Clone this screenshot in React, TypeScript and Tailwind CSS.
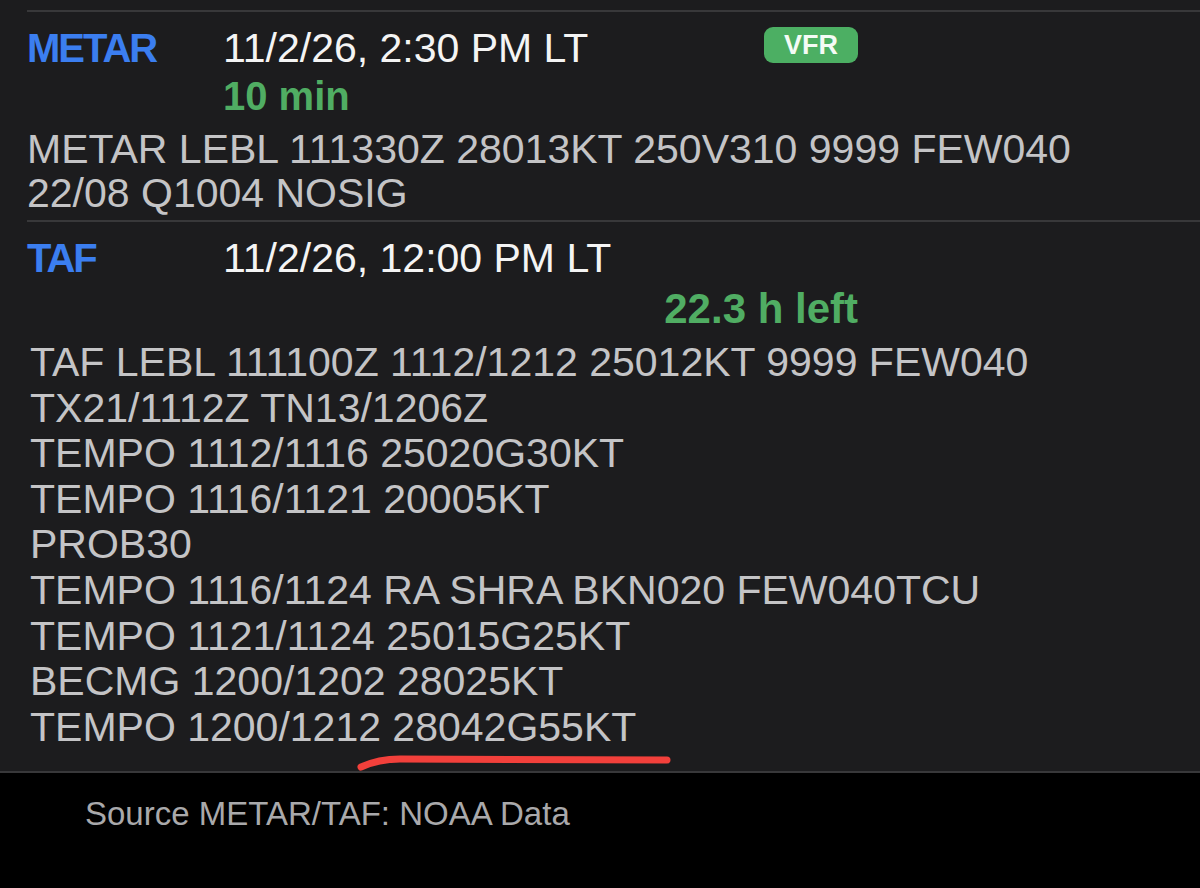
const tafLines = [
  "TAF LEBL 111100Z 1112/1212 25012KT 9999 FEW040",
  "TX21/1112Z TN13/1206Z",
  "TEMPO 1112/1116 25020G30KT",
  "TEMPO 1116/1121 20005KT",
  "PROB30",
  "TEMPO 1116/1124 RA SHRA BKN020 FEW040TCU",
  "TEMPO 1121/1124 25015G25KT",
  "BECMG 1200/1202 28025KT",
  "TEMPO 1200/1212 28042G55KT",
];

function Label({ children }: { children: React.ReactNode }) {
  return (
    <div className="w-[196px] shrink-0 text-[40px] leading-[48px] font-bold tracking-[-2px] text-[#3b7ef0]">
      {children}
    </div>
  );
}

export default function App() {
  return (
    <div className="min-h-screen bg-black font-['Liberation_Sans',Arial,sans-serif]">
      <div className="relative bg-[#1c1c1e] pl-[27px] pt-[10px] border-b-2 border-[#38383a]">
        {/* METAR */}
        <section className="border-t-2 border-[#38383a] pt-3 pb-[5px]">
          <div className="flex">
            <Label>METAR</Label>
            <div className="w-[635px]">
              <div className="flex items-start justify-between">
                <span className="text-[41px] leading-[48px] text-[#f4f4f4]">11/2/26, 2:30 PM LT</span>
                <span className="mt-[3px] flex h-[36px] w-[94px] items-center justify-center rounded-[9px] bg-[#4caf63] text-[27px] font-bold text-[#f4fbf5]">
                  VFR
                </span>
              </div>
              <div className="text-[40px] leading-[48px] font-bold text-[#50ad63]">10 min</div>
            </div>
          </div>
          <div className="mt-[7px] text-[41px] leading-[44px] text-[#c4c4c6]">
            <div>METAR LEBL 111330Z 28013KT 250V310 9999 FEW040</div>
            <div>22/08 Q1004 NOSIG</div>
          </div>
        </section>

        {/* TAF */}
        <section className="border-t-2 border-[#38383a] pt-3 pb-[21px]">
          <div className="flex">
            <Label>TAF</Label>
            <div className="w-[635px]">
              <div className="text-[41px] leading-[48px] text-[#f4f4f4]">11/2/26, 12:00 PM LT</div>
              <div className="mt-[3px] text-right text-[42px] leading-[48px] font-bold text-[#50ad63]">
                22.3 h left
              </div>
            </div>
          </div>
          <div className="mt-[7px] pl-[3px] text-[41px] leading-[45.6px] text-[#c4c4c6]">
            {tafLines.map((line) => (
              <div key={line}>{line}</div>
            ))}
          </div>
        </section>

        <svg className="pointer-events-none absolute left-0 top-0" width="1200" height="780">
          <path
            d="M361 767 C 372 762, 385 759, 400 759 L 667 760"
            fill="none"
            stroke="#f2403b"
            strokeWidth="7"
            strokeLinecap="round"
          />
        </svg>
      </div>

      <div className="pl-[85px] pt-[21px] text-[33px] leading-[40px] text-[#a9a9ab]">
        Source METAR/TAF: NOAA Data
      </div>
    </div>
  );
}
